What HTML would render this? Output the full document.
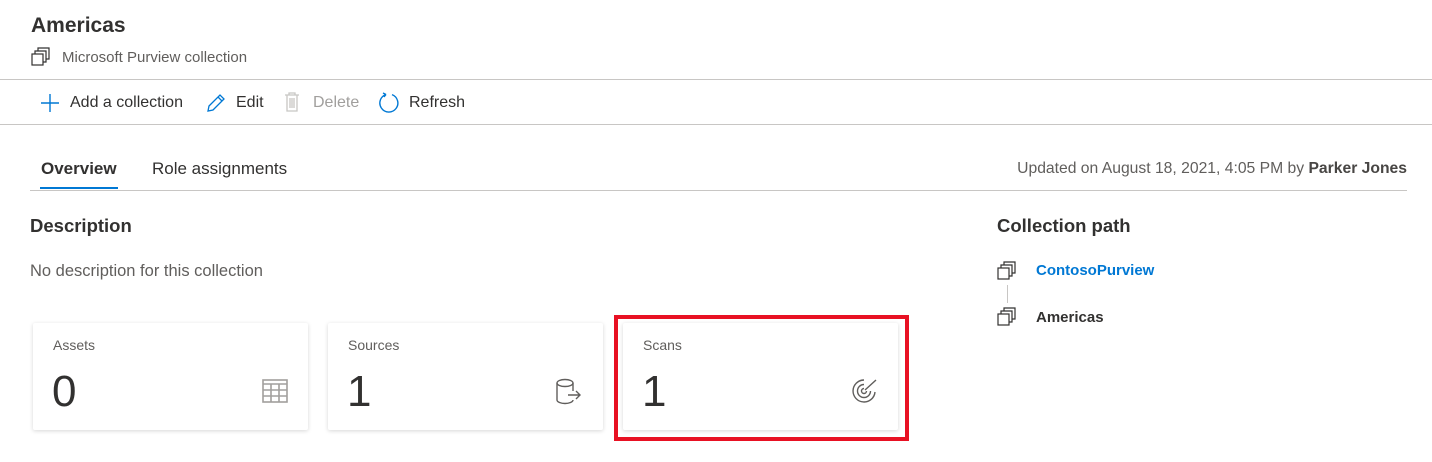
<!DOCTYPE html>
<html><head><style>
*{margin:0;padding:0;box-sizing:border-box}
body{width:1432px;height:462px;background:#fff;font-family:"Liberation Sans",sans-serif;color:#323130;position:relative;overflow:hidden}
.a{position:absolute;white-space:nowrap}
.card{position:absolute;top:323px;width:275px;height:107px;background:#fff;border-radius:2px;box-shadow:0 1px 4px rgba(0,0,0,.16)}
.card .l{position:absolute;left:20px;top:14px;font-size:14px;color:#605e5c}
.card .n{position:absolute;left:19px;top:44px;font-size:44px;font-weight:300;color:#323130}
.card svg{position:absolute}
</style></head><body>
<div class="a" style="left:31px;top:14px;font-size:21px;font-weight:bold;color:#323130">Americas</div>
<svg class="a" style="left:31px;top:47px" width="20" height="20" viewBox="0 0 20 20" fill="none" stroke="#323130" stroke-width="1.2"><rect x="1" y="7" width="11" height="11"/><path d="M4 7V4h11v11h-3M7 4V1h11v11h-3"/></svg>
<div class="a" style="left:62px;top:49px;font-size:15px;color:#605e5c">Microsoft Purview collection</div>
<div class="a" style="left:0;top:79px;width:1432px;height:1px;background:#c8c6c4"></div>
<svg class="a" style="left:40px;top:93px" width="20" height="20" viewBox="0 0 20 20" stroke="#0078d4" stroke-width="1.4"><path d="M10 1v18M1 10h18"/></svg>
<div class="a" style="left:70px;top:94px;font-size:16px">Add a collection</div>
<svg class="a" style="left:205px;top:92px" width="22" height="22" viewBox="0 0 22 22" fill="none" stroke="#0078d4" stroke-width="1.3"><path d="M3 19l1-5L15 3l4 4L8 18z M13 5l4 4"/></svg>
<div class="a" style="left:236px;top:94px;font-size:16px">Edit</div>
<svg class="a" style="left:284px;top:92px" width="16" height="20" viewBox="0 0 16 20" fill="none" stroke="#c8c6c4" stroke-width="1.3"><path d="M1 3h14M5 3V1h6v2M3 3v16h10V3M6 6v10M8 6v10M10 6v10"/></svg>
<div class="a" style="left:313px;top:94px;font-size:16px;color:#a19f9d">Delete</div>
<svg class="a" style="left:378px;top:92px" width="22" height="22" viewBox="0 0 22 22" fill="none" stroke="#0078d4" stroke-width="1.4"><path d="M8 2.5A9 9 0 1 0 14 2.6M8 2.5L5 1M8 2.5L6 5"/></svg>
<div class="a" style="left:409px;top:94px;font-size:16px">Refresh</div>
<div class="a" style="left:0;top:124px;width:1432px;height:1px;background:#c8c6c4"></div>
<div class="a" style="left:41px;top:159px;font-size:17px;font-weight:bold">Overview</div>
<div class="a" style="left:40px;top:187px;width:78px;height:2px;background:#0078d4"></div>
<div class="a" style="left:152px;top:159px;font-size:17px">Role assignments</div>
<div class="a" style="right:25px;top:160px;font-size:15.7px;color:#605e5c">Updated on August 18, 2021, 4:05 PM by <b style="color:#484644">Parker Jones</b></div>
<div class="a" style="left:30px;top:190px;width:1377px;height:1px;background:#c8c6c4"></div>
<div class="a" style="left:30px;top:215px;font-size:18.5px;font-weight:bold;color:#323130">Description</div>
<div class="a" style="left:30px;top:262px;font-size:16.5px;color:#605e5c">No description for this collection</div>
<div class="a" style="left:997px;top:215px;font-size:18.5px;font-weight:bold;color:#323130">Collection path</div>
<svg class="a" style="left:997px;top:261px" width="20" height="20" viewBox="0 0 20 20" fill="none" stroke="#323130" stroke-width="1.2"><rect x="1" y="7" width="11" height="11"/><path d="M4 7V4h11v11h-3M7 4V1h11v11h-3"/></svg>
<div class="a" style="left:1036px;top:262px;font-size:15px;font-weight:bold;color:#0078d4">ContosoPurview</div>
<div class="a" style="left:1007px;top:285px;width:1px;height:18px;background:#c8c6c4"></div>
<svg class="a" style="left:997px;top:307px" width="20" height="20" viewBox="0 0 20 20" fill="none" stroke="#323130" stroke-width="1.2"><rect x="1" y="7" width="11" height="11"/><path d="M4 7V4h11v11h-3M7 4V1h11v11h-3"/></svg>
<div class="a" style="left:1036px;top:309px;font-size:15px;font-weight:bold">Americas</div>
<div class="card" style="left:33px"><div class="l">Assets</div><div class="n">0</div>
<svg style="left:229px;top:56px" width="26" height="24" viewBox="0 0 26 24" fill="none" stroke="#a19f9d" stroke-width="1.6"><rect x="1" y="1" width="24" height="22"/><path d="M1 5h24M1 11h24M1 17h24M9 5v18M17 5v18"/></svg></div>
<div class="card" style="left:328px"><div class="l">Sources</div><div class="n">1</div>
<svg style="left:227px;top:55px" width="28" height="28" viewBox="0 0 28 28" fill="none" stroke="#605e5c" stroke-width="1.4"><ellipse cx="10" cy="5" rx="8" ry="3.5"/><path d="M2 5v17c0 2 4 3.5 8 3.5s8-1.5 8-3.5M18 5v8M13 17h12M21 13l4 4-4 4"/></svg></div>
<div class="card" style="left:623px"><div class="l">Scans</div><div class="n">1</div>
<svg style="left:229px;top:55px" width="26" height="26" viewBox="0 0 26 26" fill="none" stroke="#605e5c" stroke-width="1.4"><path d="M12 2A11 11 0 1 0 23 14M12 6.5A6.5 6.5 0 1 0 18.5 13M12 10.5A2.5 2.5 0 1 0 14.5 13M13 12L24 2"/></svg></div>
<div class="a" style="left:614px;top:315px;width:295px;height:126px;border:4px solid #e81123"></div>
</body></html>
